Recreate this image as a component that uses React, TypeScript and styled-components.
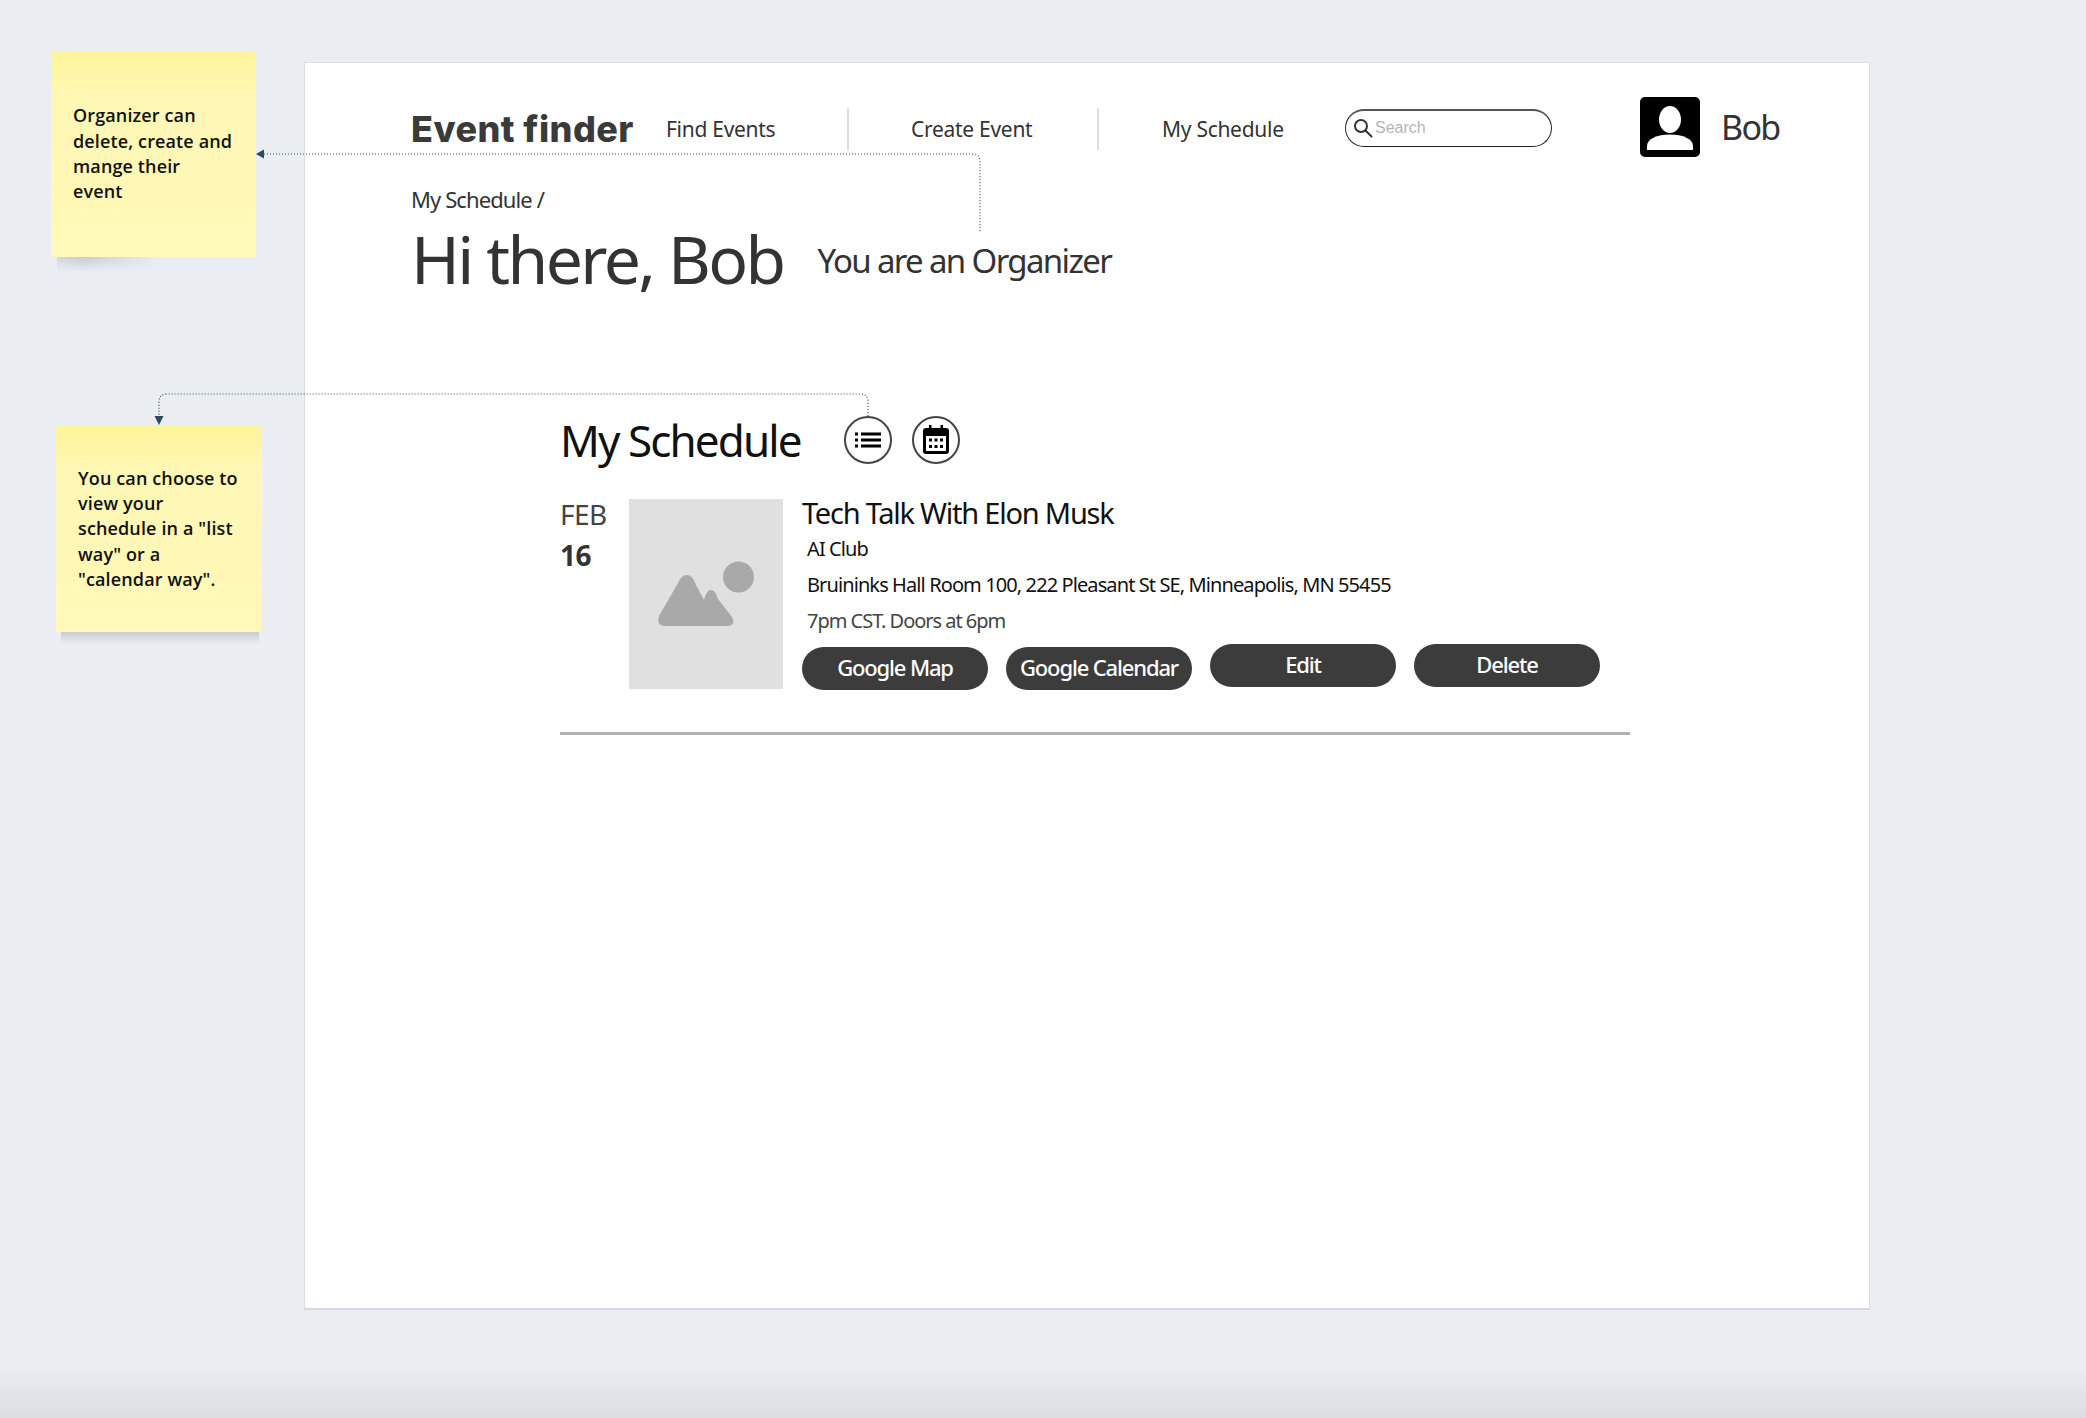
import React from 'react';
import styled, { createGlobalStyle } from 'styled-components';

const GlobalStyle = createGlobalStyle`
  html, body {
    margin: 0;
    padding: 0;
  }
  body {
    font-family: 'Noto Sans', 'Open Sans', sans-serif;
    color: #333;
  }
`;

const Board = styled.div`
  position: relative;
  display: flex;
  align-items: flex-start;
  width: 2086px;
  height: 1418px;
  overflow: hidden;
  background: linear-gradient(to bottom, #eaedf2 0, #eaedf2 1365px, #dadde1 1418px);
`;

const NotesColumn = styled.aside`
  display: flex;
  flex-direction: column;
  gap: 169px;
  width: 304px;
  padding-top: 51px;
  flex-shrink: 0;
`;

const Sticky = styled.div<{ $indent: number; $width: number; $shortShadow?: boolean }>`
  position: relative;
  display: flex;
  align-items: center;
  box-sizing: border-box;
  width: ${(p) => p.$width}px;
  height: 206px;
  margin-left: ${(p) => p.$indent}px;
  padding: 0 12px 0 22px;
  border-radius: 2px;
  background: linear-gradient(to bottom, #fff49c 0, #fff7b4 45px, #fff8b8 100%);
  font-family: 'Open Sans', sans-serif;
  font-weight: 600;
  font-size: 18px;
  line-height: 25.3px;
  letter-spacing: 0.13px;
  color: #111;

  &::after {
    content: '';
    position: absolute;
    left: ${(p) => (p.$shortShadow ? '6px' : '5px')};
    top: 100%;
    width: ${(p) => (p.$shortShadow ? '100px' : '198px')};
    height: ${(p) => (p.$shortShadow ? '15px' : '12px')};
    background: linear-gradient(to bottom, rgba(110, 115, 120, 0.28), rgba(110, 115, 120, 0));
    ${(p) =>
      p.$shortShadow &&
      `
      mask-image: linear-gradient(to right, rgba(0, 0, 0, 0.6), #000 25%, transparent);
      `}
  }
`;

const Page = styled.main`
  box-sizing: border-box;
  width: 1566px;
  height: 1248px;
  margin-top: 62px;
  padding: 34px 0 0 106px;
  background: #fff;
  border: 1px solid #d9dee4;
  border-bottom: 2px solid #d5d8de;
`;

const Header = styled.header`
  display: flex;
  align-items: center;
  height: 60px;
`;

const Brand = styled.div`
  width: 255px;
  margin-top: 4px;
  font-family: Inter, sans-serif;
  font-weight: 800;
  font-size: 36px;
  letter-spacing: 0.45px;
  color: #3a3a3a;
  white-space: nowrap;
`;

const NavItem = styled.div<{ $width: number; $divider?: boolean; $pad?: number }>`
  display: flex;
  align-items: center;
  box-sizing: border-box;
  width: ${(p) => p.$width}px;
  height: 42px;
  margin-top: 3px;
  padding-left: ${(p) => p.$pad ?? 0}px;
  border-right: ${(p) => (p.$divider ? '2px solid #dfdfdf' : 'none')};
  font-size: 21px;
  letter-spacing: -0.28px;
  color: #333;
  white-space: nowrap;
`;

const SearchBox = styled.div`
  display: flex;
  align-items: center;
  gap: 2px;
  box-sizing: border-box;
  width: 207px;
  height: 38px;
  margin-top: 1px;
  padding-left: 7px;
  border: 1px solid #222;
  border-top: 2px solid #555;
  border-radius: 19px;
  font-family: 'Liberation Sans', Arial, sans-serif;
  font-size: 16px;
  color: #b5b5b5;
`;

const Profile = styled.div`
  display: flex;
  align-items: center;
  gap: 21px;
  margin-left: 88px;
`;

const ProfileName = styled.div`
  font-size: 34px;
  letter-spacing: -1.7px;
  color: #333;
`;

const Breadcrumb = styled.div`
  margin-top: 27px;
  font-size: 22px;
  line-height: 30px;
  letter-spacing: -0.9px;
  color: #333;
`;

const Greeting = styled.div`
  display: flex;
  align-items: baseline;
  gap: 34px;
  margin-top: 1px;
`;

const Headline = styled.h1`
  margin: 0;
  font-size: 66px;
  font-weight: 400;
  line-height: 86px;
  letter-spacing: -2.6px;
  color: #333;
`;

const RoleLabel = styled.div`
  position: relative;
  top: -11px;
  font-size: 33px;
  letter-spacing: -1.65px;
  color: #333;
`;

const Schedule = styled.section`
  width: 1070px;
  margin: 113px 0 0 149px;
`;

const ScheduleTitleRow = styled.div`
  display: flex;
  align-items: center;
  height: 50px;
`;

const ScheduleTitle = styled.h2`
  width: 284px;
  margin: 2px 0 0;
  font-size: 44px;
  font-weight: 400;
  letter-spacing: -1.9px;
  color: #111;
  white-space: nowrap;
`;

const IconCircle = styled.div`
  display: flex;
  align-items: center;
  justify-content: center;
  box-sizing: border-box;
  width: 48px;
  height: 48px;
  margin: 1px 20px 0 0;
  border: 2px solid #444;
  border-radius: 50%;
`;

const EventRow = styled.article`
  display: flex;
  align-items: flex-start;
  margin-top: 35px;
  padding-bottom: 42px;
  border-bottom: 3px solid #b0b0b0;
`;

const DateColumn = styled.div`
  width: 69px;
  flex-shrink: 0;
`;

const Month = styled.div`
  margin-top: -2px;
  font-size: 28px;
  line-height: 34px;
  letter-spacing: -0.5px;
  color: #444;
`;

const Day = styled.div`
  margin-top: 7px;
  font-size: 28px;
  line-height: 34px;
  font-weight: 700;
  letter-spacing: -0.5px;
  color: #333;
`;

const Thumb = styled.div`
  display: flex;
  width: 154px;
  height: 190px;
  flex-shrink: 0;
  background: #e0e0e0;
`;

const Details = styled.div`
  display: flex;
  flex-direction: column;
  margin-left: 19px;
`;

const EventTitle = styled.h3`
  margin: -1px 0 3px;
  font-size: 29px;
  font-weight: 400;
  line-height: 30px;
  letter-spacing: -1.23px;
  color: #111;
  white-space: nowrap;
`;

const InfoLine = styled.div<{ $muted?: boolean }>`
  height: 36px;
  padding-left: 5px;
  font-size: 20px;
  line-height: 36px;
  letter-spacing: ${(p) => (p.$muted ? '-1.02px' : '-0.9px')};
  color: ${(p) => (p.$muted ? '#444' : '#111')};
  white-space: nowrap;
`;

const ActionRow = styled.div`
  display: flex;
  align-items: flex-start;
  gap: 18px;
  margin-top: 5px;
`;

const ActionButton = styled.button<{ $lowered?: boolean }>`
  width: 186px;
  height: 43px;
  margin-top: ${(p) => (p.$lowered ? '3px' : '0')};
  padding: 0 0 3px;
  border: none;
  border-radius: 22px;
  background: #3c3c3c;
  font-family: inherit;
  font-size: 22px;
  font-weight: 500;
  letter-spacing: -1.15px;
  color: #fff;
  white-space: nowrap;
`;

const Connectors = styled.svg`
  position: absolute;
  left: 0;
  top: 0;
  pointer-events: none;
`;

const SearchIcon = () => (
  <svg width="20" height="20" viewBox="0 0 20 20" fill="none" stroke="#333" strokeWidth="2">
    <circle cx="8" cy="8" r="6" />
    <path d="M12.5 12.5 L18.5 18.5" strokeLinecap="round" />
  </svg>
);

const AvatarIcon = () => (
  <svg width="60" height="60" viewBox="0 0 60 60">
    <rect width="60" height="60" rx="5" fill="#000" />
    <ellipse cx="30" cy="22.5" rx="11" ry="13.5" fill="#fff" />
    <path d="M7 53 V49 C7 42 17 37.5 30 37.5 C43 37.5 53 42 53 49 V53 Z" fill="#fff" />
  </svg>
);

const ListIcon = () => (
  <svg width="26" height="16" viewBox="0 0 26 16" fill="#000">
    <rect x="0" y="0.5" width="3" height="3" />
    <rect x="0" y="6.5" width="3" height="3" />
    <rect x="0" y="12.5" width="3" height="3" />
    <rect x="6" y="0.5" width="20" height="3" />
    <rect x="6" y="6.5" width="20" height="3" />
    <rect x="6" y="12.5" width="20" height="3" />
  </svg>
);

const CalendarIcon = () => (
  <svg width="26" height="29" viewBox="0 0 26 29">
    <path
      d="M6 0 H8.5 V3 H17.5 V0 H20 V3 H23 A3 3 0 0 1 26 6 V26 A3 3 0 0 1 23 29 H3 A3 3 0 0 1 0 26 V6 A3 3 0 0 1 3 3 H6 Z"
      fill="#000"
    />
    <rect x="3" y="11" width="20" height="15" fill="#fff" />
    {[6, 11.5, 17].map((x) =>
      [13.5, 20].map((y) => <rect key={`${x}-${y}`} x={x} y={y} width="3" height="3" fill="#000" />)
    )}
  </svg>
);

const PlaceholderArt = () => (
  <svg width="154" height="190" viewBox="0 0 154 190">
    <circle cx="109.5" cy="78" r="15.5" fill="#a9a9a9" />
    <path
      d="M58 76 C62 76 65 80 67 86 L75 101 C77 94 79 91 82 91 C85 91 87 94 89 100 L103 118 C106 124 104 127 98 127 L36 127 C30 127 28 123 30 117 L49 84 C51 79 54 76 58 76 Z"
      fill="#a9a9a9"
    />
  </svg>
);

const App: React.FC = () => {
  return (
    <>
      <GlobalStyle />
      <Board>
        <NotesColumn>
          <Sticky $indent={51} $width={205} $shortShadow>
            <div>
              Organizer can
              <br />
              delete, create and
              <br />
              mange their
              <br />
              event
            </div>
          </Sticky>
          <Sticky $indent={56} $width={206}>
            <div>
              You can choose to
              <br />
              view your
              <br />
              schedule in a "list
              <br />
              way" or a
              <br />
              "calendar way".
            </div>
          </Sticky>
        </NotesColumn>

        <Page>
          <Header>
            <Brand>Event finder</Brand>
            <NavItem $width={183} $divider>
              Find Events
            </NavItem>
            <NavItem $width={250} $divider $pad={62}>
              Create Event
            </NavItem>
            <NavItem $width={246} $pad={63}>
              My Schedule
            </NavItem>
            <SearchBox>
              <SearchIcon />
              Search
            </SearchBox>
            <Profile>
              <AvatarIcon />
              <ProfileName>Bob</ProfileName>
            </Profile>
          </Header>

          <Breadcrumb>My Schedule /</Breadcrumb>
          <Greeting>
            <Headline>Hi there, Bob</Headline>
            <RoleLabel>You are an Organizer</RoleLabel>
          </Greeting>

          <Schedule>
            <ScheduleTitleRow>
              <ScheduleTitle>My Schedule</ScheduleTitle>
              <IconCircle>
                <ListIcon />
              </IconCircle>
              <IconCircle>
                <CalendarIcon />
              </IconCircle>
            </ScheduleTitleRow>

            <EventRow>
              <DateColumn>
                <Month>FEB</Month>
                <Day>16</Day>
              </DateColumn>
              <Thumb>
                <PlaceholderArt />
              </Thumb>
              <Details>
                <EventTitle>Tech Talk With Elon Musk</EventTitle>
                <InfoLine>AI Club</InfoLine>
                <InfoLine>Bruininks Hall Room 100, 222 Pleasant St SE, Minneapolis, MN 55455</InfoLine>
                <InfoLine $muted>7pm CST. Doors at 6pm</InfoLine>
                <ActionRow>
                  <ActionButton $lowered>Google Map</ActionButton>
                  <ActionButton $lowered>Google Calendar</ActionButton>
                  <ActionButton>Edit</ActionButton>
                  <ActionButton>Delete</ActionButton>
                </ActionRow>
              </Details>
            </EventRow>
          </Schedule>
        </Page>

        <Connectors width="2086" height="1418" fill="none">
          <path
            d="M264 154 H972 Q980 154 980 162 V233"
            stroke="#2f4a5e"
            strokeWidth="1.2"
            strokeDasharray="1 2"
          />
          <path d="M256 154 L264 149.5 V158.5 Z" fill="#2f4a5e" />
          <path
            d="M868 416 V402 Q868 394 860 394 H167 Q159 394 159 402 V416"
            stroke="#2f4a5e"
            strokeWidth="1.2"
            strokeDasharray="1 2"
          />
          <path d="M159 425 L154.5 416 H163.5 Z" fill="#2f4a5e" />
        </Connectors>
      </Board>
    </>
  );
};

export default App;
